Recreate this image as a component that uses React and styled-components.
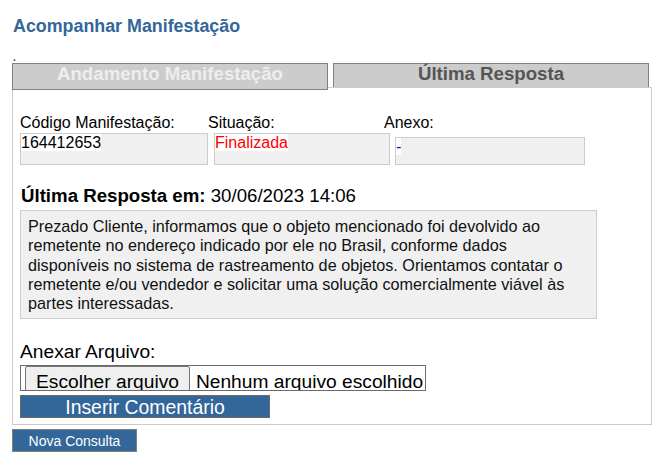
import React from "react";
import styled, { createGlobalStyle } from "styled-components";

const Global = createGlobalStyle`
  html, body { margin: 0; padding: 0; background: #fff; }
  body { font-family: "Liberation Sans", Arial, sans-serif; color: #000; }
`;

const Page = styled.div`
  padding: 16px 0 0 12px;
  width: 640px;
  display: flex;
  flex-direction: column;
  align-items: flex-start;
`;

const Title = styled.h1`
  margin: 0;
  font-size: 17.85px;
  line-height: 20.7px;
  font-weight: bold;
  color: #336699;
  padding-left: 1px;
`;

const Dot = styled.div`
  margin-top: 16.5px;
  padding-left: 1px;
  font-size: 10px;
  font-weight: bold;
  line-height: 10px;
  height: 10px;
  color: #1d3f73;
`;

const TabRow = styled.div`
  display: flex;
  align-items: flex-start;
  gap: 5px;
  height: 24px;
`;

const Tab = styled.div`
  position: relative;
  z-index: 1;
  box-sizing: border-box;
  width: 316px;
  height: ${(p) => (p.$active ? "24px" : "27px")};
  border: 1px solid #808080;
  border-bottom: ${(p) => (p.$active ? "none" : "1px solid #808080")};
  background: #cccccc;
  color: ${(p) => (p.$active ? "#555555" : "#eeeeee")};
  font-size: 18.67px;
  font-weight: bold;
  line-height: 20px;
  text-align: center;
`;

const Panel = styled.div`
  box-sizing: border-box;
  width: 640px;
  border: 1px solid #cccccc;
  padding: 26px 7px 6px 7px;
  display: flex;
  flex-direction: column;
  align-items: flex-start;
`;

const LabelRow = styled.div`
  display: flex;
  font-size: 16px;
  line-height: 18px;
  height: 18px;
`;

const Label = styled.div`
  width: ${(p) => p.$w}px;
`;

const BoxRow = styled.div`
  display: flex;
  align-items: flex-end;
  margin-top: 1px;
`;

const Field = styled.div`
  box-sizing: border-box;
  width: ${(p) => p.$w}px;
  height: ${(p) => p.$h}px;
  margin-right: ${(p) => p.$mr ?? 0}px;
  background: #f0f0f0;
  border: 1px solid #cccccc;
  font-size: 16px;
  line-height: 18px;
`;

const Value = styled.span`
  background: #ffffff;
  color: ${(p) => p.$color || "#000"};
`;

const Heading = styled.div`
  margin-top: 20px;
  font-size: 18.67px;
  line-height: 22px;
  padding-left: 1px;
`;

const Strong = styled.b`
  font-weight: bold;
`;

const Message = styled.div`
  box-sizing: border-box;
  margin-top: 3px;
  width: 577px;
  background: #f0f0f0;
  border: 1px solid #cccccc;
  padding: 6px 20px 5px 7px;
  font-size: 16.2px;
  line-height: 19.2px;
  color: #111;
`;

const SectionLabel = styled.div`
  margin-top: 22px;
  font-size: 19.2px;
  line-height: 22px;
`;

const FileBox = styled.div`
  box-sizing: border-box;
  margin-top: 2px;
  width: 406px;
  height: 26px;
  border: 1px solid #6b6b6b;
  overflow: hidden;
  display: flex;
  align-items: baseline;
  font-size: 19.2px;
  line-height: 22px;
`;

const ChooseButton = styled.button`
  box-sizing: border-box;
  margin: 0 0 0 4px;
  height: 30px;
  padding: 2px 10px 0 10px;
  border: 1px solid #767676;
  border-radius: 2px;
  background: #efefef;
  color: #000;
  font-family: inherit;
  font-size: 19.2px;
  line-height: 22px;
`;

const FileName = styled.span`
  margin-left: 6px;
  white-space: nowrap;
`;

const BlueButton = styled.button`
  box-sizing: border-box;
  width: ${(p) => p.$w}px;
  height: 23px;
  margin: ${(p) => p.$m};
  padding: ${(p) => (p.$small ? "0" : "1px 0 0 0")};
  border: 1px solid ${(p) => (p.$small ? "#808080" : "#6a6a6a")};
  background: #336699;
  color: #ffffff;
  font-family: "Liberation Sans", Arial, sans-serif;
  font-size: ${(p) => (p.$small ? "14px" : "19.4px")};
  line-height: 20px;
  text-align: center;
`;

export default function App() {
  return (
    <>
      <Global />
      <Page>
        <Title>Acompanhar Manifestação</Title>
        <Dot>.</Dot>
        <TabRow>
          <Tab>Andamento Manifestação</Tab>
          <Tab $active>Última Resposta</Tab>
        </TabRow>
        <Panel>
          <LabelRow>
            <Label $w={188}>Código Manifestação:</Label>
            <Label $w={176}>Situação:</Label>
            <Label $w={100}>Anexo:</Label>
          </LabelRow>
          <BoxRow>
            <Field $w={188} $h={32} $mr={6}>
              <Value>164412653</Value>
            </Field>
            <Field $w={176} $h={32} $mr={5}>
              <Value $color="#ff0000">Finalizada</Value>
            </Field>
            <Field $w={190} $h={28}>
              <Value $color="#0000ff">-</Value>
            </Field>
          </BoxRow>
          <Heading>
            <Strong>Última Resposta em:</Strong> 30/06/2023 14:06
          </Heading>
          <Message>
            Prezado Cliente, informamos que o objeto mencionado foi devolvido ao
            remetente no endereço indicado por ele no Brasil, conforme dados
            disponíveis no sistema de rastreamento de objetos. Orientamos contatar
            o remetente e/ou vendedor e solicitar uma solução comercialmente
            viável às partes interessadas.
          </Message>
          <SectionLabel>Anexar Arquivo:</SectionLabel>
          <FileBox>
            <ChooseButton type="button">Escolher arquivo</ChooseButton>
            <FileName>Nenhum arquivo escolhido</FileName>
          </FileBox>
          <BlueButton type="button" $w={250} $m="4px 0 0 0">
            Inserir Comentário
          </BlueButton>
        </Panel>
        <BlueButton type="button" $small $w={125} $m="4px 0 0 0">
          Nova Consulta
        </BlueButton>
      </Page>
    </>
  );
}
